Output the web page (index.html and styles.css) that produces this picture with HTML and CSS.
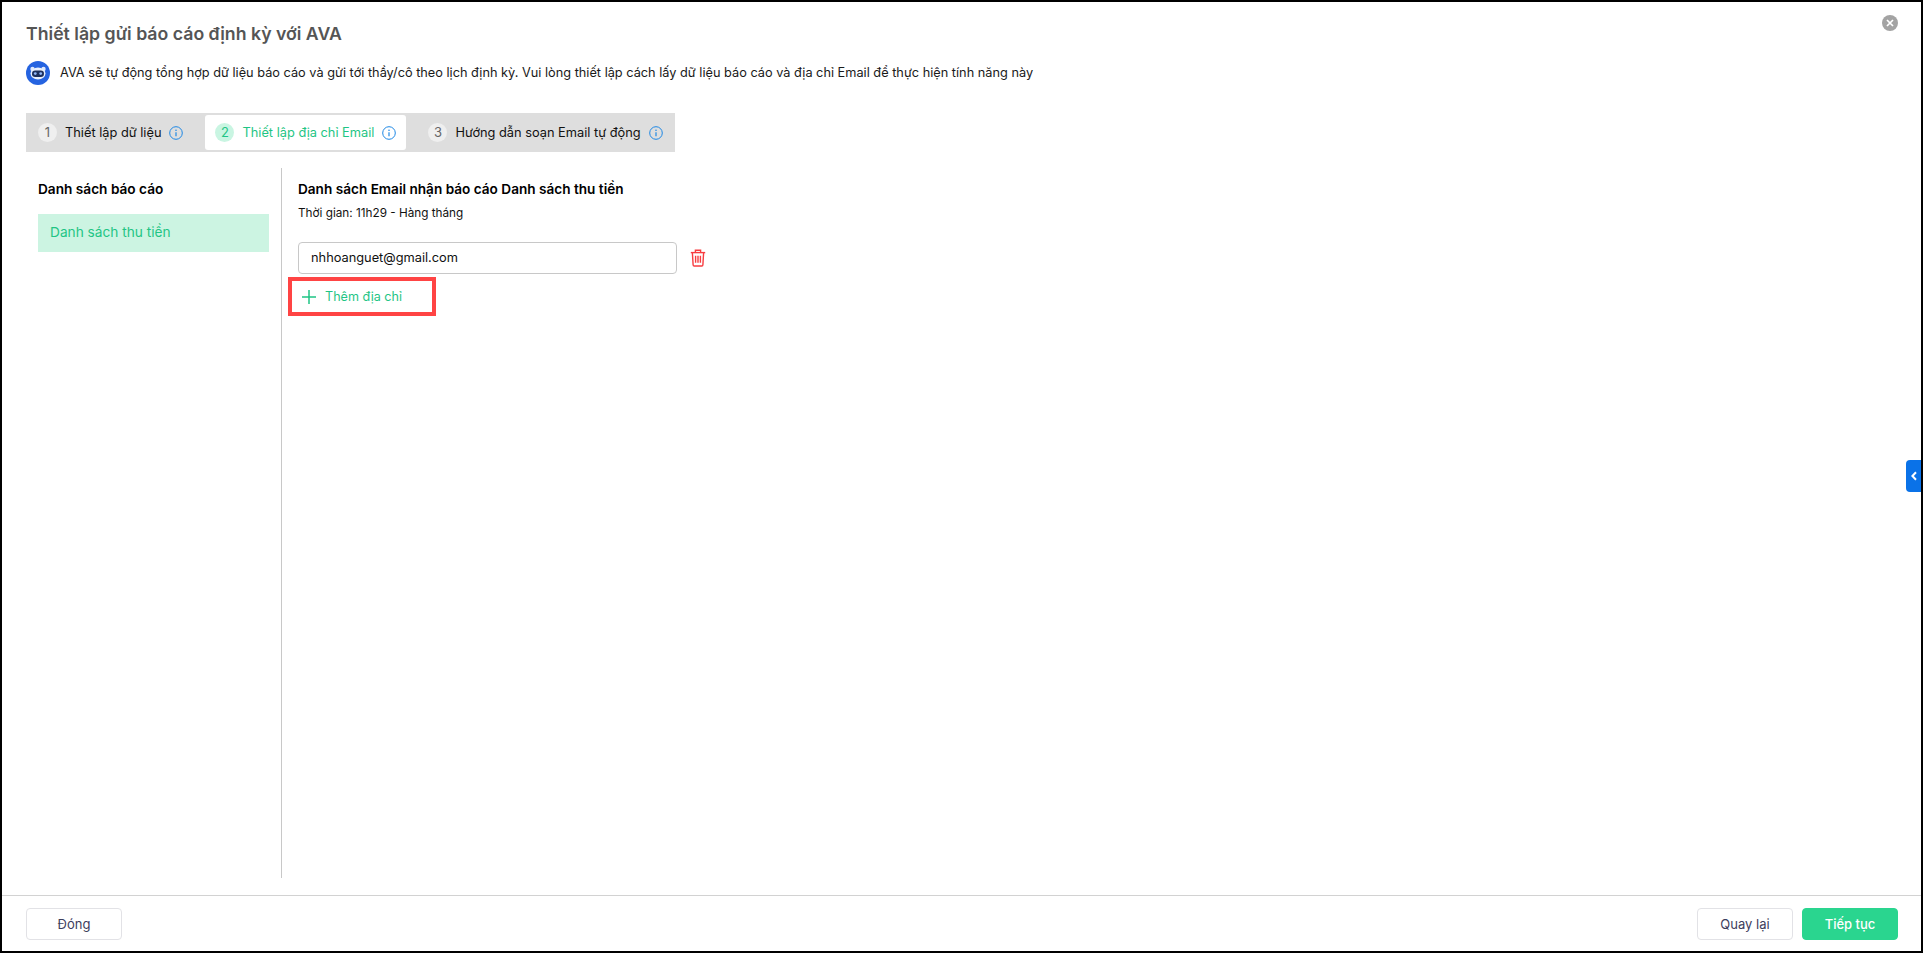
FILE: index.html
```html
<!DOCTYPE html>
<html lang="vi">
<head>
<meta charset="utf-8">
<title>Thiết lập gửi báo cáo định kỳ với AVA</title>
<link rel="stylesheet" href="styles.css">
</head>
<body>
<div class="dialog">
  <header class="head">
    <h1 class="title">Thiết lập gửi báo cáo định kỳ với AVA</h1>
    <div class="intro">
      <svg class="ava" viewBox="0 0 24 24" width="24" height="24">
        <circle cx="12" cy="12" r="12" fill="#2563e0"/>
        <circle cx="6.5" cy="8" r="2.2" fill="#dfe9fb"/>
        <circle cx="17.5" cy="8" r="2.2" fill="#dfe9fb"/>
        <ellipse cx="12" cy="12.5" rx="7.5" ry="6" fill="#e8effc"/>
        <rect x="6" y="9.5" width="12" height="6.5" rx="3.2" fill="#1c2f5c"/>
        <circle cx="9.3" cy="12.6" r="1.4" fill="#8fb4f5"/>
        <circle cx="14.7" cy="12.6" r="1.4" fill="#8fb4f5"/>
      </svg>
      <p class="intro-text">AVA sẽ tự động tổng hợp dữ liệu báo cáo và gửi tới thầy/cô theo lịch định kỳ. Vui lòng thiết lập cách lấy dữ liệu báo cáo và địa chỉ Email để thực hiện tính năng này</p>
    </div>
    <div class="tabs">
      <div class="tab">
        <span class="num">1</span><span>Thiết lập dữ liệu</span>
        <svg class="info" viewBox="0 0 14 14" width="14" height="14"><circle cx="7" cy="7" r="6.3" fill="none" stroke="#1e88e5" stroke-width="1"/><path d="M7 6.2v4" stroke="#1e88e5" stroke-width="1.2"/><circle cx="7" cy="4.2" r=".8" fill="#1e88e5"/></svg>
      </div>
      <div class="tab tab-active">
        <span class="num num-active">2</span><span>Thiết lập địa chỉ Email</span>
        <svg class="info" viewBox="0 0 14 14" width="14" height="14"><circle cx="7" cy="7" r="6.3" fill="none" stroke="#1e88e5" stroke-width="1"/><path d="M7 6.2v4" stroke="#1e88e5" stroke-width="1.2"/><circle cx="7" cy="4.2" r=".8" fill="#1e88e5"/></svg>
      </div>
      <div class="tab">
        <span class="num">3</span><span>Hướng dẫn soạn Email tự động</span>
        <svg class="info" viewBox="0 0 14 14" width="14" height="14"><circle cx="7" cy="7" r="6.3" fill="none" stroke="#1e88e5" stroke-width="1"/><path d="M7 6.2v4" stroke="#1e88e5" stroke-width="1.2"/><circle cx="7" cy="4.2" r=".8" fill="#1e88e5"/></svg>
      </div>
    </div>
  </header>

  <main class="content">
    <aside class="side">
      <h2 class="side-title">Danh sách báo cáo</h2>
      <div class="side-item">Danh sách thu tiền</div>
    </aside>
    <section class="detail">
      <h2 class="detail-title">Danh sách Email nhận báo cáo Danh sách thu tiền</h2>
      <p class="detail-time">Thời gian: 11h29 - Hàng tháng</p>
      <div class="email-row">
        <div class="email-input">nhhoanguet@gmail.com</div>
        <svg class="trash" viewBox="0 0 16 18" width="16" height="18" fill="none" stroke="#f73c40" stroke-width="1.4">
          <path d="M.8 3.6h14.4"/>
          <path d="M5.4 3.4V1.2h5.2v2.2"/>
          <path d="M2.4 3.8l.7 12a1.2 1.2 0 0 0 1.2 1.2h7.4a1.2 1.2 0 0 0 1.2-1.2l.7-12"/>
          <path d="M5.6 6.8v7M8 6.8v7M10.4 6.8v7"/>
        </svg>
      </div>
      <button class="add" type="button">
        <svg viewBox="0 0 14 14" width="14" height="14"><path d="M7 0v14M0 7h14" stroke="#1fc585" stroke-width="1.5"/></svg>
        <span>Thêm địa chỉ</span>
      </button>
    </section>
  </main>

  <footer class="foot">
    <button class="btn" type="button">Đóng</button>
    <div class="foot-right">
      <button class="btn" type="button">Quay lại</button>
      <button class="btn btn-primary" type="button">Tiếp tục</button>
    </div>
  </footer>

  <svg class="close" viewBox="0 0 16 16" width="16" height="16">
    <circle cx="8" cy="8" r="8" fill="#a3a3a3"/>
    <path d="M5 5l6 6M11 5l-6 6" stroke="#fff" stroke-width="1.7"/>
  </svg>
  <div class="handle">
    <svg viewBox="0 0 8 10" width="8" height="10"><path d="M6 1.2L2.4 5 6 8.8" fill="none" stroke="#fff" stroke-width="2"/></svg>
  </div>
</div>
</body>
</html>
```
FILE: styles.css
```css
* { box-sizing: border-box; }
html, body { margin: 0; height: 100%; overflow: hidden; }
body { font-family: Inter, "Noto Sans", sans-serif; background: #000; color: #000; }

.dialog {
  position: relative;
  height: 953px;
  width: 1923px;
  border: 2px solid #000;
  background: #fff;
  display: flex;
  flex-direction: column;
}

.head { padding: 20px 24px 0; }
.title { margin: 0; font-size: 17.7px; line-height: 24px; font-weight: 600; color: #555; }

.intro { display: flex; align-items: center; gap: 10px; margin-top: 15px; }
.ava { flex: none; }
.intro-text { margin: 0; font-size: 12.75px; line-height: 24px; color: #1a1a1a; }

.tabs {
  display: inline-flex;
  align-items: center;
  height: 39px;
  margin-top: 28px;
  padding: 0 2px;
  background: #dedede;
  vertical-align: top;
}
.tab {
  display: flex;
  align-items: center;
  height: 35px;
  padding: 0 10px;
  font-size: 12.8px;
  color: #111;
  border-radius: 3px;
  margin-right: 12px;
}
.tab:last-child { margin-right: 0; }
.tab-active { background: #fff; color: #1fc585; }
.num {
  flex: none;
  width: 19px;
  height: 19px;
  margin-right: 8px;
  border-radius: 50%;
  background: #efefef;
  color: #666;
  font-size: 13px;
  line-height: 19px;
  text-align: center;
}
.num-active { background: #c9f5e2; color: #1fc585; }
.info { flex: none; margin-left: 8px; }

.content { flex: none; height: 710px; margin: 16px 0 17px; padding-left: 36px; display: flex; }
.side { width: 244px; border-right: 1px solid #c8c8c8; }
.side-title { margin: 12px 0 0; font-size: 13.65px; line-height: 18px; font-weight: 600; }
.side-item {
  width: 231px;
  height: 38px;
  margin-top: 16px;
  padding-left: 12px;
  background: #ccf4e2;
  color: #1fc585;
  font-size: 13.7px;
  line-height: 36px;
}

.detail { padding-left: 16px; }
.detail-title { margin: 12px 0 0; font-size: 13.6px; line-height: 18px; font-weight: 600; }
.detail-time { margin: 6px 0 0; font-size: 11.75px; line-height: 18px; color: #111; }
.email-row { display: flex; align-items: center; gap: 13px; margin-top: 20px; }
.email-input {
  width: 379px;
  height: 32px;
  padding-left: 12px;
  border: 1px solid #c8c8c8;
  border-radius: 4px;
  font-size: 12.8px;
  line-height: 30px;
  color: #111;
}
.add {
  display: flex;
  align-items: center;
  gap: 9px;
  width: 148px;
  height: 39px;
  margin: 3px 0 0 -10px;
  padding: 0 0 0 10px;
  border: 4px solid #ff4444;
  background: #fff;
  font: 12.6px Inter, sans-serif;
  color: #1fc585;
  cursor: pointer;
}

.foot {
  flex: 1;
  display: flex;
  align-items: center;
  justify-content: space-between;
  padding: 0 23px 0 24px;
  border-top: 1px solid #d2d2d2;
}
.foot-right { display: flex; gap: 9px; }
.btn {
  width: 96px;
  height: 32px;
  border: 1px solid #e2e2e6;
  border-radius: 4px;
  background: #fff;
  color: #3d3d5c;
  font: 400 13px Inter, sans-serif;
  cursor: pointer;
}
.btn-primary { background: #2ad58f; border-color: #2ad58f; color: #fff; font-weight: 500; }

.close { position: absolute; top: 13px; right: 23px; }
.handle {
  position: absolute;
  top: 458px;
  right: 0;
  width: 15px;
  height: 32px;
  background: #0a72e8;
  border-radius: 4px 0 0 4px;
  display: flex;
  align-items: center;
  justify-content: center;
}
```
